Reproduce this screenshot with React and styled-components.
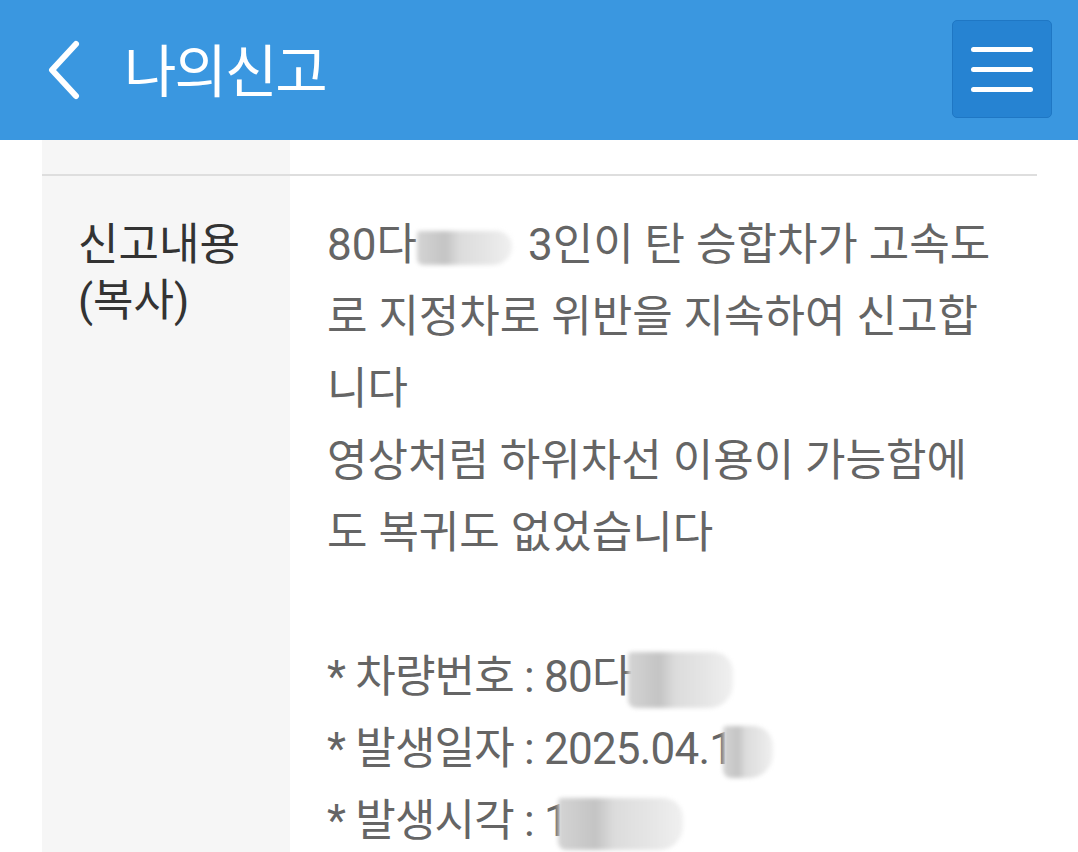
import React from "react";
import styled, { createGlobalStyle } from "styled-components";

const Global = createGlobalStyle`
  html, body { margin: 0; padding: 0; background: #ffffff; }
  body { font-family: Roboto, "Noto Sans CJK KR", sans-serif; overflow: hidden; }
  * { box-sizing: border-box; }
`;

const Page = styled.div`
  width: 1078px;
  height: 852px;
  overflow: hidden;
  background: #fff;
  display: flex;
  flex-direction: column;
`;

const Header = styled.header`
  flex: 0 0 140px;
  background: #3a97e0;
  display: flex;
  align-items: center;
  padding: 0 26px 0 44px;
`;

const BackButton = styled.button`
  width: 40px;
  height: 60px;
  border: 0;
  background: transparent;
  padding: 0;
  margin-right: 40px;
  display: flex;
  align-items: center;
  justify-content: center;
`;

const Title = styled.h1`
  margin: 0;
  flex: 1;
  color: #fff;
  font-family: "Noto Sans CJK KR", sans-serif;
  font-weight: 400;
  font-size: 57px;
  letter-spacing: -2px;
  line-height: 1;
  padding-bottom: 6px;
`;

const MenuButton = styled.button`
  width: 100px;
  height: 98px;
  margin-bottom: 2px;
  background: #2683d2;
  border: 1px solid #1f77c4;
  border-radius: 5px;
  display: flex;
  flex-direction: column;
  align-items: center;
  justify-content: center;
  gap: 15px;
  padding: 0;
`;

const MenuLine = styled.span`
  width: 62px;
  height: 5px;
  border-radius: 3px;
  background: #fff;
`;

const Table = styled.div`
  flex: 1;
  margin: 0 41px 0 42px;
  display: flex;
  flex-direction: column;
`;

const Row = styled.div`
  display: grid;
  grid-template-columns: 248px 1fr;
  border-bottom: ${(p) => (p.$divider ? "2px solid #dedede" : "0")};
  flex: ${(p) => (p.$grow ? "1" : "0 0 auto")};
  min-height: ${(p) => p.$height || "auto"};
`;

const LabelCell = styled.div`
  background: #f6f6f6;
  color: #333;
  font-family: Roboto, "Noto Sans CJK KR", sans-serif;
  font-size: 44px;
  line-height: 56px;
  padding: ${(p) => (p.$empty ? "0" : "41px 20px 0 36px")};
`;

const ValueCell = styled.div`
  color: #656565;
  font-family: Roboto, "Noto Sans CJK KR", sans-serif;
  font-size: 44px;
  line-height: 72px;
  padding: 33px 38px 0 37px;
  white-space: pre-wrap;
`;

const Detail = styled.span`
  letter-spacing: -0.8px;
`;

const Redact = styled.span`
  display: inline-block;
  vertical-align: middle;
  width: ${(p) => p.$w}px;
  height: ${(p) => p.$h || 40}px;
  margin: ${(p) => p.$m || "0"};
  border-radius: 4px 20px 24px 8px;
  background: linear-gradient(
    90deg,
    #d4d4d4 0%,
    #c4c4c4 30%,
    #dcdcdc 45%,
    #e4e4e4 70%,
    #f0f0f0 100%
  );
  filter: blur(2px);
`;

export default function App() {
  return (
    <Page>
      <Global />
      <Header>
        <BackButton aria-label="뒤로">
          <svg width="40" height="60" viewBox="0 0 40 60">
            <polyline
              points="32,4 8,30 32,56"
              fill="none"
              stroke="#fff"
              strokeWidth="6"
              strokeLinecap="round"
              strokeLinejoin="round"
            />
          </svg>
        </BackButton>
        <Title>나의신고</Title>
        <MenuButton aria-label="메뉴">
          <MenuLine />
          <MenuLine />
          <MenuLine />
        </MenuButton>
      </Header>
      <Table>
        <Row $divider $height="36px">
          <LabelCell $empty />
          <div />
        </Row>
        <Row $grow>
          <LabelCell>
            신고내용
            <br />
            (복사)
          </LabelCell>
          <ValueCell>
            80다<Redact $w={95} $h={34} $m="0 16px 0 0" />3인이 탄 승합차가 고속도로 지정차로 위반을 지속하여 신고합니다
            {"\n"}영상처럼 하위차선 이용이 가능함에도 복귀도 없었습니다
            {"\n\n"}
            <Detail>
              * 차량번호 : 80다<Redact $w={105} $h={56} $m="0 0 0 -4px" />
              {"\n"}* 발생일자 : 2025.04.1<Redact $w={50} $h={52} $m="0 0 0 -10px" />
              {"\n"}* 발생시각 : 1<Redact $w={125} $h={52} $m="0 0 0 -10px" />
            </Detail>
            {"\n"}
          </ValueCell>
        </Row>
      </Table>
    </Page>
  );
}
